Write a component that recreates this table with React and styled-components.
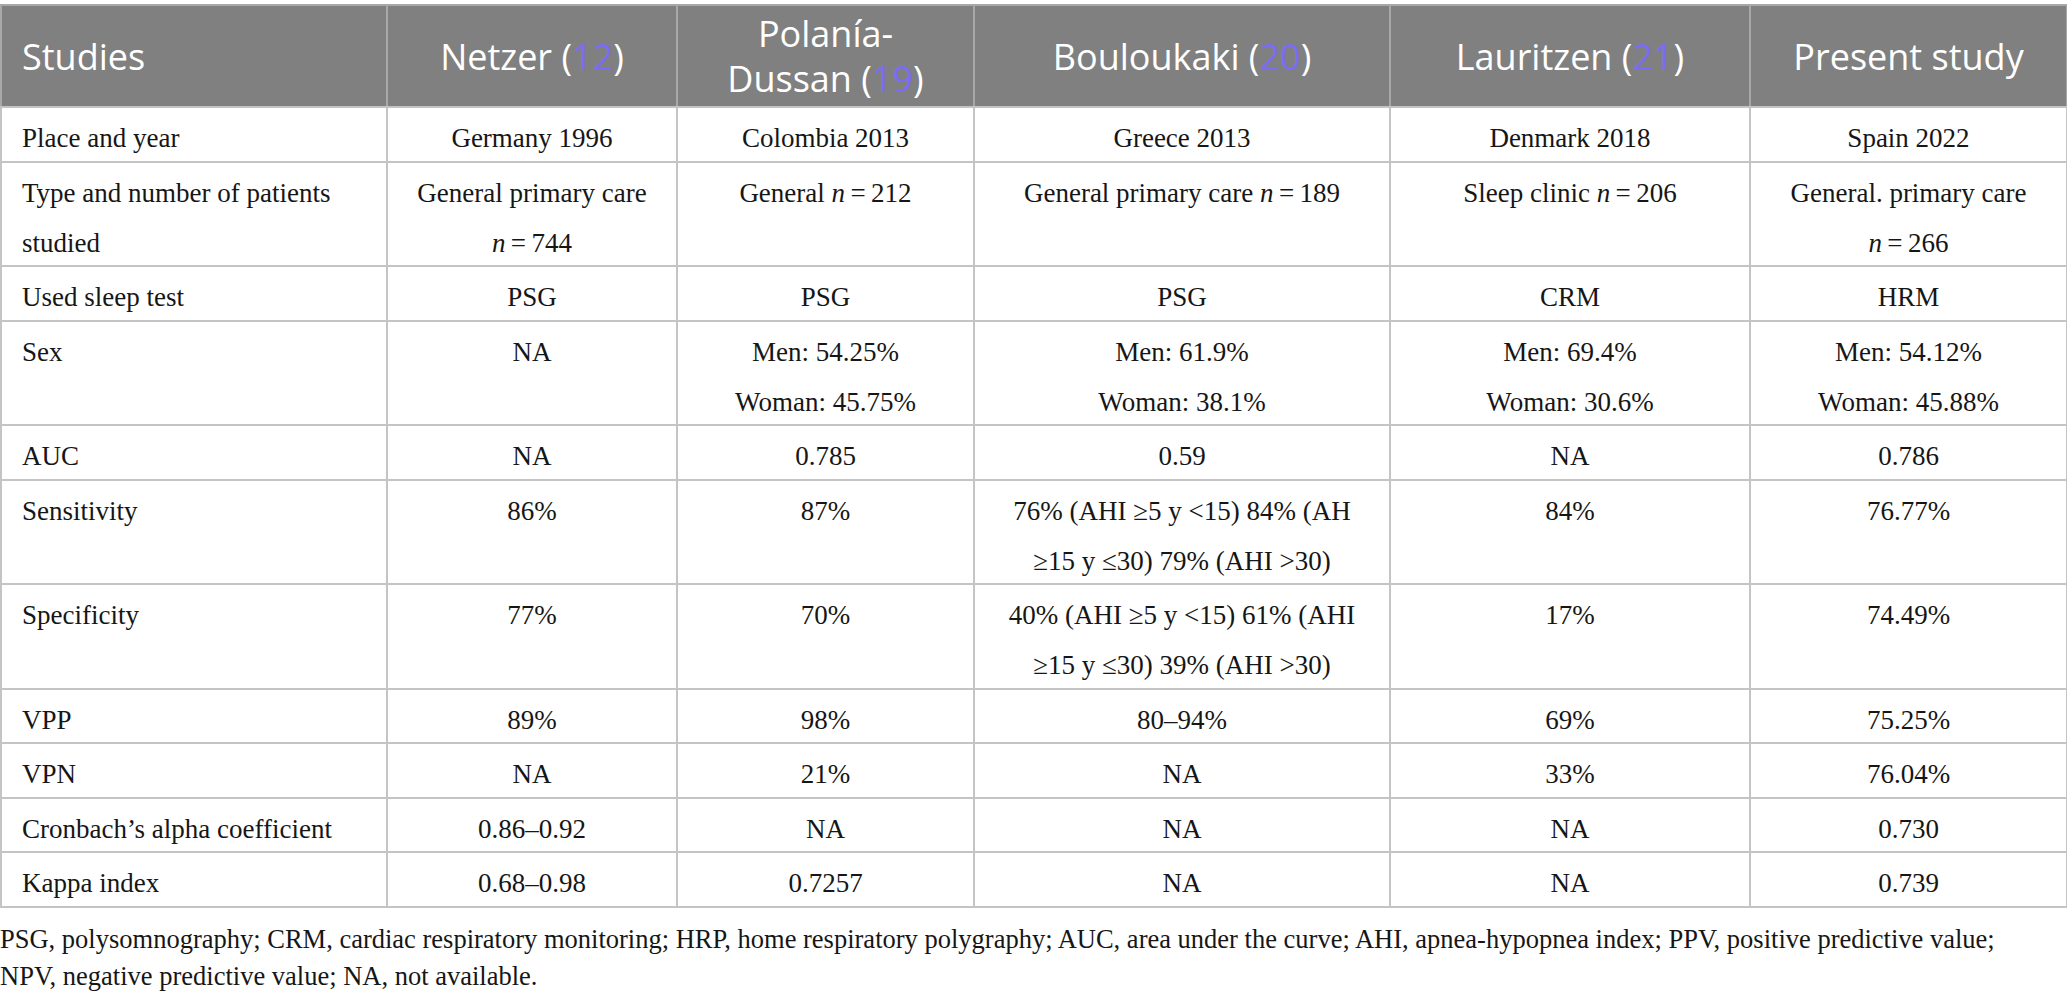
import React from 'react';
import styled, { createGlobalStyle } from 'styled-components';

const GlobalStyle = createGlobalStyle`
  body {
    margin: 0;
    background: #ffffff;
  }
`;

const columns = [386, 290, 297, 416, 360, 317];

const Ref = ({ n }) => (
  <>
    (<RefNum>{n}</RefNum>)
  </>
);

const N = ({ value }) => (
  <>
    <Italic>n</Italic>{'\u2009=\u2009' + value}
  </>
);

const headers = [
  'Studies',
  <>Netzer <Ref n="12" /></>,
  <>Polanía-<br />Dussan <Ref n="19" /></>,
  <>Bouloukaki <Ref n="20" /></>,
  <>Lauritzen <Ref n="21" /></>,
  'Present study',
];

const rows = [
  ['Place and year', 'Germany 1996', 'Colombia 2013', 'Greece 2013', 'Denmark 2018', 'Spain 2022'],
  [
    <>Type and number of patients<br />studied</>,
    <>General primary care<br /><N value="744" /></>,
    <>General <N value="212" /></>,
    <>General primary care <N value="189" /></>,
    <>Sleep clinic <N value="206" /></>,
    <>General. primary care<br /><N value="266" /></>,
  ],
  ['Used sleep test', 'PSG', 'PSG', 'PSG', 'CRM', 'HRM'],
  [
    'Sex',
    'NA',
    <>Men: 54.25%<br />Woman: 45.75%</>,
    <>Men: 61.9%<br />Woman: 38.1%</>,
    <>Men: 69.4%<br />Woman: 30.6%</>,
    <>Men: 54.12%<br />Woman: 45.88%</>,
  ],
  ['AUC', 'NA', '0.785', '0.59', 'NA', '0.786'],
  [
    'Sensitivity',
    '86%',
    '87%',
    <>76% (AHI ≥5 y &lt;15) 84% (AH<br />≥15 y ≤30) 79% (AHI &gt;30)</>,
    '84%',
    '76.77%',
  ],
  [
    'Specificity',
    '77%',
    '70%',
    <>40% (AHI ≥5 y &lt;15) 61% (AHI<br />≥15 y ≤30) 39% (AHI &gt;30)</>,
    '17%',
    '74.49%',
  ],
  ['VPP', '89%', '98%', '80–94%', '69%', '75.25%'],
  ['VPN', 'NA', '21%', 'NA', '33%', '76.04%'],
  ['Cronbach’s alpha coefficient', '0.86–0.92', 'NA', 'NA', 'NA', '0.730'],
  ['Kappa index', '0.68–0.98', '0.7257', 'NA', 'NA', '0.739'],
];

const App = () => {
  return (
    <Page>
      <GlobalStyle />
      <Table>
        <colgroup>
          {columns.map((w, i) => (
            <col key={i} style={{ width: w }} />
          ))}
        </colgroup>
        <thead>
          <tr>
            {headers.map((h, i) => (
              <HeadCell key={i} $first={i === 0}>{h}</HeadCell>
            ))}
          </tr>
        </thead>
        <tbody>
          {rows.map((row, r) => (
            <tr key={r}>
              {row.map((cell, c) => (
                <Cell key={c} $first={c === 0}>
                  <CellText>{cell}</CellText>
                </Cell>
              ))}
            </tr>
          ))}
        </tbody>
      </Table>
      <Footnote>
        PSG, polysomnography; CRM, cardiac respiratory monitoring; HRP, home respiratory polygraphy; AUC, area under the curve; AHI, apnea-hypopnea index; PPV, positive predictive value;<br />
        NPV, negative predictive value; NA, not available.
      </Footnote>
    </Page>
  );
};

export default App;

const Page = styled.div`
  width: 2067px;
  padding-top: 4px;
`;

const Table = styled.table`
  width: 2066px;
  table-layout: fixed;
  border-collapse: collapse;
  border: 2px solid #c4c4c4;
`;

const HeadCell = styled.th`
  background: #808080;
  color: #ffffff;
  font-family: 'Open Sans', 'Noto Sans', sans-serif;
  font-weight: 400;
  font-size: 36px;
  line-height: 45px;
  height: 100px;
  padding: 0 20px;
  text-align: ${(p) => (p.$first ? 'left' : 'center')};
  vertical-align: middle;
  border: 2px solid #a8a8a8;
  border-bottom-color: #c4c4c4;
`;

const RefNum = styled.span`
  color: #7b6cf4;
`;

const Italic = styled.i`
  font-style: italic;
`;

const Cell = styled.td`
  font-family: 'Liberation Serif', 'Times New Roman', serif;
  font-size: 27px;
  line-height: 50px;
  color: #161616;
  padding: 0 20px 2.5px;
  text-align: ${(p) => (p.$first ? 'left' : 'center')};
  vertical-align: top;
  border: 2px solid #c4c4c4;
`;

// nudges the serif glyphs lower in their line box without changing the row height
const CellText = styled.div`
  padding-top: 5px;
  margin-bottom: -5px;
`;

const Footnote = styled.p`
  margin: 13px 0 0;
  font-family: 'Liberation Serif', 'Times New Roman', serif;
  font-size: 26.5px;
  line-height: 37px;
  color: #161616;
  white-space: nowrap;
`;
